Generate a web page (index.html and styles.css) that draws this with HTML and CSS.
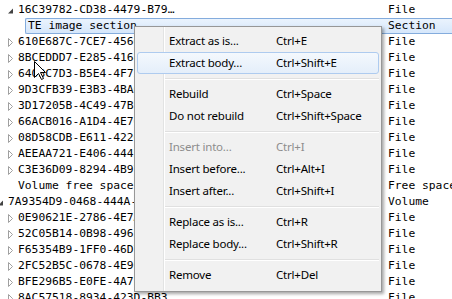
FILE: index.html
```html
<!DOCTYPE html>
<html lang="en">
<head>
  <meta charset="UTF-8">
  <title>Structure</title>
  <link rel="stylesheet" href="styles.css">
</head>
<body>
  <div class="tree">
    <div class="row"><div class="name d1"><span class="arrow"><svg class="open" width="6" height="6" viewBox="0 0 6 6"><path d="M5 0.5V5.5H0Z" fill="#424242"/></svg></span><span class="label">16C39782-CD38-4479-B79…</span></div><span class="type">File</span></div>
    <div class="row selected"><div class="name d2"><span class="arrow"></span><span class="label">TE image section</span></div><span class="type">Section</span></div>
    <div class="row"><div class="name d1"><span class="arrow"><svg class="shut" width="6" height="9" viewBox="0 0 6 9"><path d="M0.5 0.5L4.5 4.5L0.5 8.5Z" fill="#fff" stroke="#a0a0a0"/></svg></span><span class="label">610E687C-7CE7-4566-…</span></div><span class="type">File</span></div>
    <div class="row"><div class="name d1"><span class="arrow"><svg class="shut" width="6" height="9" viewBox="0 0 6 9"><path d="M0.5 0.5L4.5 4.5L0.5 8.5Z" fill="#fff" stroke="#a0a0a0"/></svg></span><span class="label">8BCEDDD7-E285-4168-…</span></div><span class="type">File</span></div>
    <div class="row"><div class="name d1"><span class="arrow"><svg class="shut" width="6" height="9" viewBox="0 0 6 9"><path d="M0.5 0.5L4.5 4.5L0.5 8.5Z" fill="#fff" stroke="#a0a0a0"/></svg></span><span class="label">6403C7D3-B5E4-4F72-…</span></div><span class="type">File</span></div>
    <div class="row"><div class="name d1"><span class="arrow"><svg class="shut" width="6" height="9" viewBox="0 0 6 9"><path d="M0.5 0.5L4.5 4.5L0.5 8.5Z" fill="#fff" stroke="#a0a0a0"/></svg></span><span class="label">9D3CFB39-E3B3-4BA6-…</span></div><span class="type">File</span></div>
    <div class="row"><div class="name d1"><span class="arrow"><svg class="shut" width="6" height="9" viewBox="0 0 6 9"><path d="M0.5 0.5L4.5 4.5L0.5 8.5Z" fill="#fff" stroke="#a0a0a0"/></svg></span><span class="label">3D17205B-4C49-47B2-…</span></div><span class="type">File</span></div>
    <div class="row"><div class="name d1"><span class="arrow"><svg class="shut" width="6" height="9" viewBox="0 0 6 9"><path d="M0.5 0.5L4.5 4.5L0.5 8.5Z" fill="#fff" stroke="#a0a0a0"/></svg></span><span class="label">66ACB016-A1D4-4E76-…</span></div><span class="type">File</span></div>
    <div class="row"><div class="name d1"><span class="arrow"><svg class="shut" width="6" height="9" viewBox="0 0 6 9"><path d="M0.5 0.5L4.5 4.5L0.5 8.5Z" fill="#fff" stroke="#a0a0a0"/></svg></span><span class="label">08D58CDB-E611-4226-…</span></div><span class="type">File</span></div>
    <div class="row"><div class="name d1"><span class="arrow"><svg class="shut" width="6" height="9" viewBox="0 0 6 9"><path d="M0.5 0.5L4.5 4.5L0.5 8.5Z" fill="#fff" stroke="#a0a0a0"/></svg></span><span class="label">AEEAA721-E406-4442-…</span></div><span class="type">File</span></div>
    <div class="row"><div class="name d1"><span class="arrow"><svg class="shut" width="6" height="9" viewBox="0 0 6 9"><path d="M0.5 0.5L4.5 4.5L0.5 8.5Z" fill="#fff" stroke="#a0a0a0"/></svg></span><span class="label">C3E36D09-8294-4B97-…</span></div><span class="type">File</span></div>
    <div class="row"><div class="name d1"><span class="arrow"></span><span class="label">Volume free space</span></div><span class="type">Free space</span></div>
    <div class="row"><div class="name d0"><span class="arrow"><svg class="open" width="6" height="6" viewBox="0 0 6 6"><path d="M5 0.5V5.5H0Z" fill="#424242"/></svg></span><span class="label">7A9354D9-0468-444A-…</span></div><span class="type">Volume</span></div>
    <div class="row"><div class="name d1"><span class="arrow"><svg class="shut" width="6" height="9" viewBox="0 0 6 9"><path d="M0.5 0.5L4.5 4.5L0.5 8.5Z" fill="#fff" stroke="#a0a0a0"/></svg></span><span class="label">0E90621E-2786-4E7A-…</span></div><span class="type">File</span></div>
    <div class="row"><div class="name d1"><span class="arrow"><svg class="shut" width="6" height="9" viewBox="0 0 6 9"><path d="M0.5 0.5L4.5 4.5L0.5 8.5Z" fill="#fff" stroke="#a0a0a0"/></svg></span><span class="label">52C05B14-0B98-4962-…</span></div><span class="type">File</span></div>
    <div class="row"><div class="name d1"><span class="arrow"><svg class="shut" width="6" height="9" viewBox="0 0 6 9"><path d="M0.5 0.5L4.5 4.5L0.5 8.5Z" fill="#fff" stroke="#a0a0a0"/></svg></span><span class="label">F65354B9-1FF0-46D7-…</span></div><span class="type">File</span></div>
    <div class="row"><div class="name d1"><span class="arrow"><svg class="shut" width="6" height="9" viewBox="0 0 6 9"><path d="M0.5 0.5L4.5 4.5L0.5 8.5Z" fill="#fff" stroke="#a0a0a0"/></svg></span><span class="label">2FC52B5C-0678-4E9C-…</span></div><span class="type">File</span></div>
    <div class="row"><div class="name d1"><span class="arrow"><svg class="shut" width="6" height="9" viewBox="0 0 6 9"><path d="M0.5 0.5L4.5 4.5L0.5 8.5Z" fill="#fff" stroke="#a0a0a0"/></svg></span><span class="label">BFE296B5-E0FE-4A7E-…</span></div><span class="type">File</span></div>
    <div class="row"><div class="name d1"><span class="arrow"><svg class="shut" width="6" height="9" viewBox="0 0 6 9"><path d="M0.5 0.5L4.5 4.5L0.5 8.5Z" fill="#fff" stroke="#a0a0a0"/></svg></span><span class="label">8AC57518-8934-423D-BB3…</span></div><span class="type">File</span></div>
  </div>

  <svg class="cursor" width="13" height="20" viewBox="0 0 13 20">
    <path d="M0.5 0.5V16.5L4.5 12.5L7.5 18.5L9.5 17.5L6.5 11.5H11.5Z" fill="#fff" stroke="#000" stroke-linejoin="round"/>
  </svg>

  <div class="menu">
    <div class="item"><span>Extract as is...</span><span>Ctrl+E</span></div>
    <div class="item hot"><span>Extract body...</span><span>Ctrl+Shift+E</span></div>
    <div class="sep"></div>
    <div class="item"><span>Rebuild</span><span>Ctrl+Space</span></div>
    <div class="item"><span>Do not rebuild</span><span>Ctrl+Shift+Space</span></div>
    <div class="sep"></div>
    <div class="item off"><span>Insert into...</span><span>Ctrl+I</span></div>
    <div class="item"><span>Insert before...</span><span>Ctrl+Alt+I</span></div>
    <div class="item"><span>Insert after...</span><span>Ctrl+Shift+I</span></div>
    <div class="sep"></div>
    <div class="item"><span>Replace as is...</span><span>Ctrl+R</span></div>
    <div class="item"><span>Replace body...</span><span>Ctrl+Shift+R</span></div>
    <div class="sep"></div>
    <div class="item"><span>Remove</span><span>Ctrl+Del</span></div>
  </div>
</body>
</html>
```

FILE: styles.css
```css
* {
  margin: 0;
  padding: 0;
  box-sizing: border-box;
}

body {
  width: 452px;
  height: 299px;
  overflow: hidden;
  position: relative;
  background: #fff;
  color: #000;
  font-family: 'DejaVu Sans Mono', monospace;
  font-size: 11.3px;
}

.tree {
  margin-left: -10px;
  padding-top: 2px;
}

.row {
  display: grid;
  grid-template-columns: 398px 90px;
  height: 16px;
  line-height: 16px;
  white-space: nowrap;
}

.name {
  display: flex;
  align-items: center;
  overflow: hidden;
}

.d1 { padding-left: 10px; }
.d2 { padding-left: 20px; }

.arrow {
  flex: none;
  width: 18px;
  height: 16px;
  display: flex;
  align-items: center;
  padding-left: 8px;
}

.arrow .open { margin-top: 1px; }

.label { flex: 1; }

.type { overflow: hidden; }

.selected .label,
.selected .type {
  line-height: 14px;
  height: 16px;
  border-top: 1px solid #84acdd;
  border-bottom: 1px solid #84acdd;
  background: linear-gradient(#eaf3fd, #d6e7fb);
}

.selected .label {
  margin-left: -3px;
  padding-left: 2px;
  border-left: 1px solid #84acdd;
  border-radius: 2px 0 0 2px;
}

.cursor {
  position: absolute;
  left: 34px;
  top: 61px;
}

/* context menu */
.menu {
  position: absolute;
  left: 134px;
  top: 26px;
  width: 248px;
  padding: 3px 2px 5px;
  border: 1px solid #979797;
  background: linear-gradient(to right, #f1f1f1 28px, #e2e3e3 28px, #e2e3e3 29px, #fff 29px, #fff 30px, #f1f1f1 30px);
  box-shadow: 2px 2px 3px rgba(0, 0, 0, 0.35);
  font-family: 'Noto Sans', sans-serif;
  font-size: 11.5px;
  letter-spacing: -0.2px;
}

.item {
  display: grid;
  grid-template-columns: 107px auto;
  height: 22px;
  line-height: 20px;
  padding-left: 31px;
  border: 1px solid transparent;
  border-radius: 3px;
  white-space: nowrap;
}

.item.hot {
  border-color: #aecbef;
  background: linear-gradient(#f4f8fd, #e4eefa);
}

.item.off { color: #8d8d8d; }

.sep {
  height: 9px;
  margin-left: 28px;
  background: linear-gradient(transparent 4px, #e0e0e0 4px, #e0e0e0 5px, #fff 5px, #fff 6px, transparent 6px);
}
```
